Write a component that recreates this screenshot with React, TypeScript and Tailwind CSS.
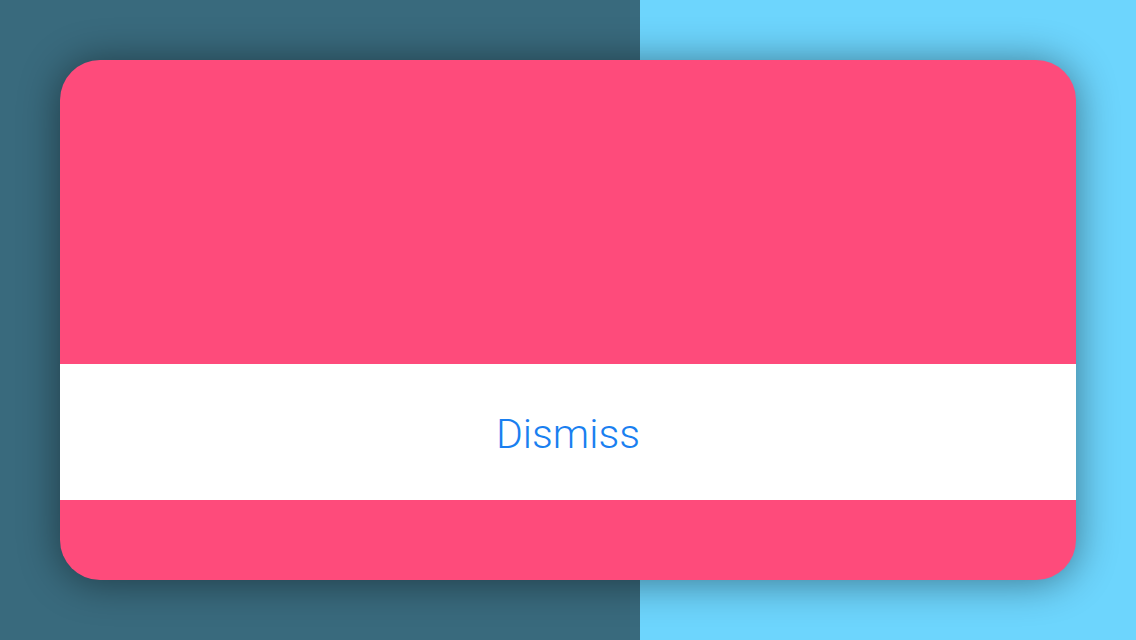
export default function App() {
  return (
    <div className="grid h-[640px] w-[1136px] overflow-hidden">
      <div className="col-start-1 row-start-1 flex">
        <div className="h-full w-[640px] bg-[#396a7d]" />
        <div className="h-full flex-1 bg-[#6dd5fd]" />
      </div>
      <div className="col-start-1 row-start-1 p-[60px]">
        <div className="flex h-[520px] flex-col overflow-hidden rounded-[40px] bg-[#fe4b7b] shadow-[0_2px_40px_rgba(0,0,0,0.45)]">
          <div className="h-[304px]" />
          <button className="flex h-[136px] items-center justify-center bg-white pt-[6px] font-['Roboto',sans-serif] text-[41px] font-light text-[#1a7ff0]">
            Dismiss
          </button>
          <div className="flex-1" />
        </div>
      </div>
    </div>
  );
}
